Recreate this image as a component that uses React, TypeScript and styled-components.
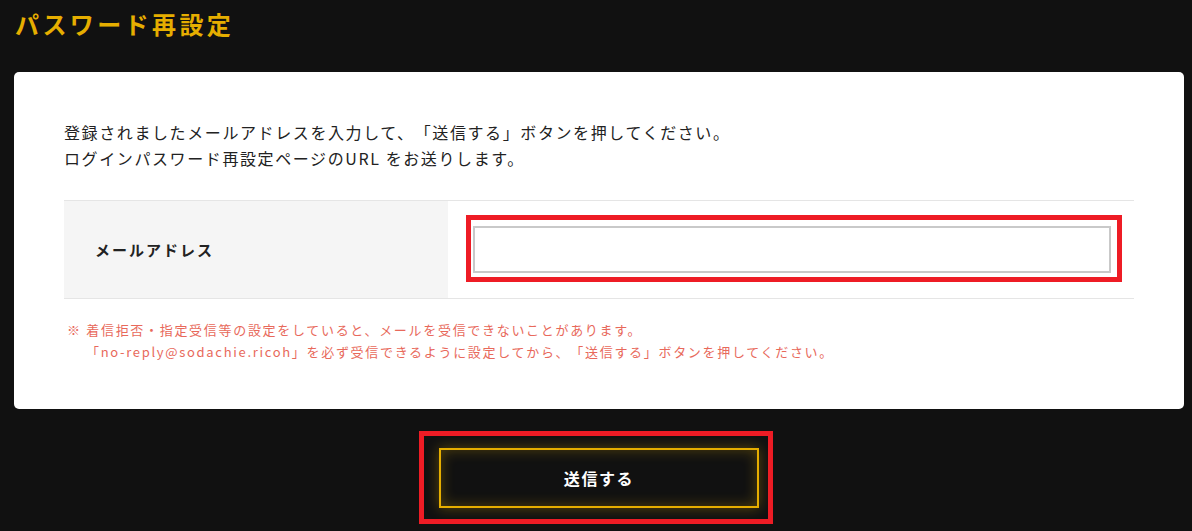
import styled, { createGlobalStyle } from 'styled-components';

const GlobalStyle = createGlobalStyle`
  html, body {
    margin: 0;
    padding: 0;
    background: #111111;
  }
  body {
    font-family: "Noto Sans CJK JP", "Noto Sans", sans-serif;
    color: #222222;
    text-spacing-trim: space-all;
  }
`;

const Page = styled.div`
  width: 1192px;
  height: 531px;
  padding: 6px 0 0 14px;
  box-sizing: border-box;
  overflow: hidden;
`;

const Title = styled.h1`
  margin: 0 0 30px 1px;
  font-size: 24px;
  line-height: 36px;
  font-weight: 700;
  letter-spacing: 3.4px;
  color: #e6ae00;
`;

const Card = styled.section`
  width: 1170px;
  box-sizing: border-box;
  background: #ffffff;
  border-radius: 5px;
  padding: 48px 50px 46px;
`;

const Lead = styled.p`
  margin: 0 0 29px;
  font-size: 16px;
  line-height: 25.6px;
  letter-spacing: 0.1em;
  color: #222222;
`;

const FormTable = styled.div`
  display: grid;
  grid-template-columns: 384px 1fr;
  border-top: 1px solid #e5e5e5;
  border-bottom: 1px solid #e5e5e5;
`;

const LabelCell = styled.div`
  display: flex;
  align-items: center;
  padding-left: 31px;
  background: #f5f5f5;
  font-size: 15px;
  font-weight: 700;
  letter-spacing: 2px;
  color: #222222;
`;

const FieldCell = styled.div`
  padding: 14px 12px 16px 18px;
`;

const Highlight = styled.div<{ $pad: string; $shift?: number }>`
  border: 5px solid #ee1c25;
  padding: ${(p) => p.$pad};
  margin-right: ${(p) => (p.$shift ? `${p.$shift}px` : '0')};
`;

const EmailInput = styled.input`
  display: block;
  width: 100%;
  height: 47px;
  box-sizing: border-box;
  border: 2px solid #c9c9c9;
  background: #fff;
  outline: none;
  font-size: 15px;
  padding: 0 12px;
`;

const Notes = styled.div`
  margin-top: 20px;
  padding-left: 3px;
  font-size: 13px;
  line-height: 22px;
  letter-spacing: 0.13em;
  color: #e8695b;
`;

const NoteLine = styled.p<{ $indent?: boolean }>`
  margin: 0;
  padding-left: ${(p) => (p.$indent ? '19px' : '0')};
`;

const Actions = styled.div`
  display: flex;
  justify-content: center;
  width: 1170px;
  margin-top: 22px;
`;

const SubmitButton = styled.button`
  display: block;
  width: 320px;
  height: 60px;
  box-sizing: border-box;
  border: 2px solid #e6ae00;
  background: #111111;
  box-shadow: 0 0 12px rgba(230, 174, 0, 0.35), inset 0 0 14px rgba(230, 174, 0, 0.3);
  color: #ffffff;
  font-family: "Noto Sans CJK JP", "Noto Sans", sans-serif;
  font-size: 16px;
  font-weight: 700;
  letter-spacing: 0.1em;
  cursor: pointer;
`;

export default function App() {
  return (
    <Page>
      <GlobalStyle />
      <Title>パスワード再設定</Title>
      <Card>
        <Lead>
          登録されましたメールアドレスを入力して、「送信する」ボタンを押してください。
          <br />
          ログインパスワード再設定ページのURL をお送りします。
        </Lead>
        <FormTable>
          <LabelCell>メールアドレス</LabelCell>
          <FieldCell>
            <Highlight $pad="6px 6px 4px 2px">
              <EmailInput type="email" />
            </Highlight>
          </FieldCell>
        </FormTable>
        <Notes>
          <NoteLine>※ 着信拒否・指定受信等の設定をしていると、メールを受信できないことがあります。</NoteLine>
          <NoteLine $indent>「no-reply@sodachie.ricoh」を必ず受信できるように設定してから、「送信する」ボタンを押してください。</NoteLine>
        </Notes>
      </Card>
      <Actions>
        <Highlight $pad="12px 9px 11px 15px" $shift={6}>
          <SubmitButton type="button">送信する</SubmitButton>
        </Highlight>
      </Actions>
    </Page>
  );
}
